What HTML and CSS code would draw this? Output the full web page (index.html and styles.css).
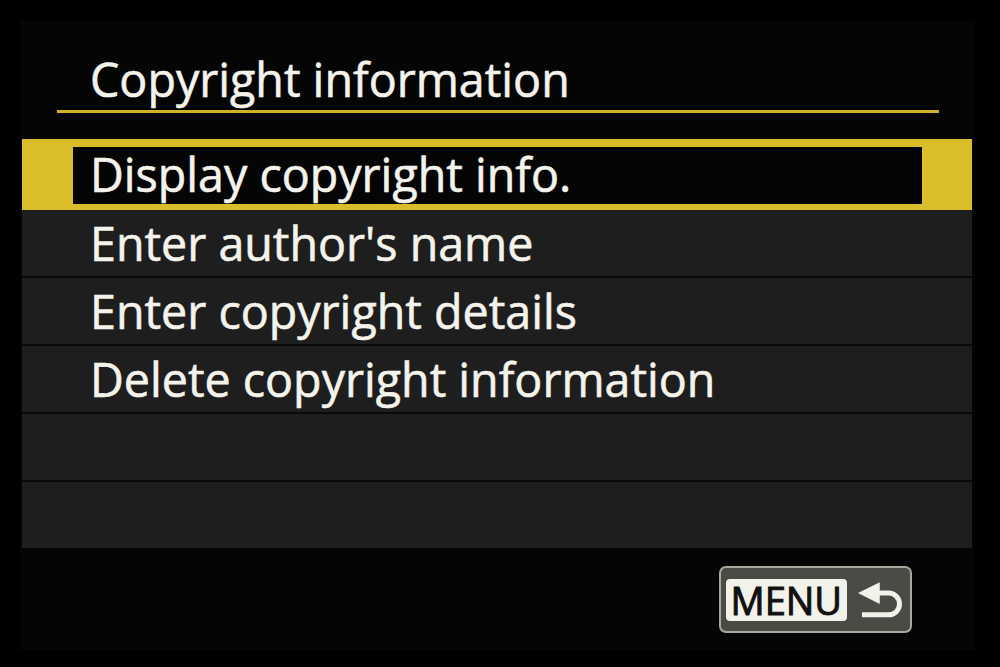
FILE: index.html
```html
<!DOCTYPE html>
<html>
<head>
<meta charset="utf-8">
<link rel="stylesheet" href="styles.css">
</head>
<body>
<div class="screen">
  <div class="title">Copyright information</div>
  <div class="title-rule"></div>
  <div class="list">
    <div class="row selected"><div class="sel-inner">Display copyright info.</div></div>
    <div class="row">Enter author's name</div>
    <div class="row">Enter copyright details</div>
    <div class="row">Delete copyright information</div>
    <div class="row"></div>
    <div class="row"></div>
  </div>
  <div class="footer">
    <div class="menu-btn">
      <span class="menu-label">MENU</span>
      <svg class="back-icon" width="48" height="40" viewBox="0 0 48 40">
        <polygon points="1,12 23,1 23,23" fill="#f2f2ea"/>
        <path d="M20 12 H32 A11 11 0 0 1 32 34 H5" fill="none" stroke="#f2f2ea" stroke-width="5"/>
      </svg>
    </div>
  </div>
</div>
</body>
</html>
```
FILE: styles.css
```css
html, body {
  margin: 0;
  padding: 0;
  background: #000;
  width: 1000px;
  height: 667px;
  overflow: hidden;
}

.screen {
  margin: 20px 0 0 20px;
  width: 955px;
  height: 630px;
  background: #050505;
  padding-top: 31px;
  box-sizing: border-box;
  font-family: "Open Sans", "Noto Sans", sans-serif;
  color: #f3f3ec;
  -webkit-text-stroke: 0.6px #f3f3ec;
}

.title {
  font-size: 46.6px;
  line-height: 56px;
  height: 56px;
  padding-left: 70px;
  white-space: nowrap;
}

.title-rule {
  margin: 3px 0 0 37px;
  width: 882px;
  height: 3px;
  background: #cfb22a;
}

.list {
  margin: 26px 0 0 2px;
  width: 950px;
  display: flex;
  flex-direction: column;
}

.row {
  height: 66px;
  line-height: 66px;
  font-size: 46.6px;
  padding-left: 68px;
  background: #1e1e1e;
  white-space: nowrap;
}

.row + .row {
  border-top: 2px solid #0a0a0a;
}

.row.selected {
  height: 71px;
  padding: 8px 50px 6px 51px;
  background: #d9bd2b;
  box-sizing: border-box;
  line-height: normal;
}

.row.selected + .row {
  border-top: none;
}

.sel-inner {
  height: 57px;
  background: #050505;
  padding-left: 17px;
  line-height: 54px;
}

.footer {
  display: flex;
  justify-content: flex-end;
  margin-top: 18px;
  padding-right: 63px;
}

.menu-btn {
  display: flex;
  align-items: center;
  gap: 10px;
  width: 193px;
  height: 67px;
  box-sizing: border-box;
  padding: 0 6px 0 5px;
  background: #4b4b46;
  border: 2px solid #a8a89e;
  border-radius: 7px;
  -webkit-text-stroke: 0;
}

.menu-label {
  display: flex;
  align-items: center;
  justify-content: center;
  width: 122px;
  height: 42px;
  background: #f2f2ea;
  border-radius: 4px;
  color: #111;
  font-family: "Open Sans", sans-serif;
  font-weight: 400;
  font-size: 38px;
  line-height: 42px;
  letter-spacing: 0;
  -webkit-text-stroke: 1px #111;
  white-space: nowrap;
}

.back-icon {
  display: block;
  margin-top: 2px;
}
```
